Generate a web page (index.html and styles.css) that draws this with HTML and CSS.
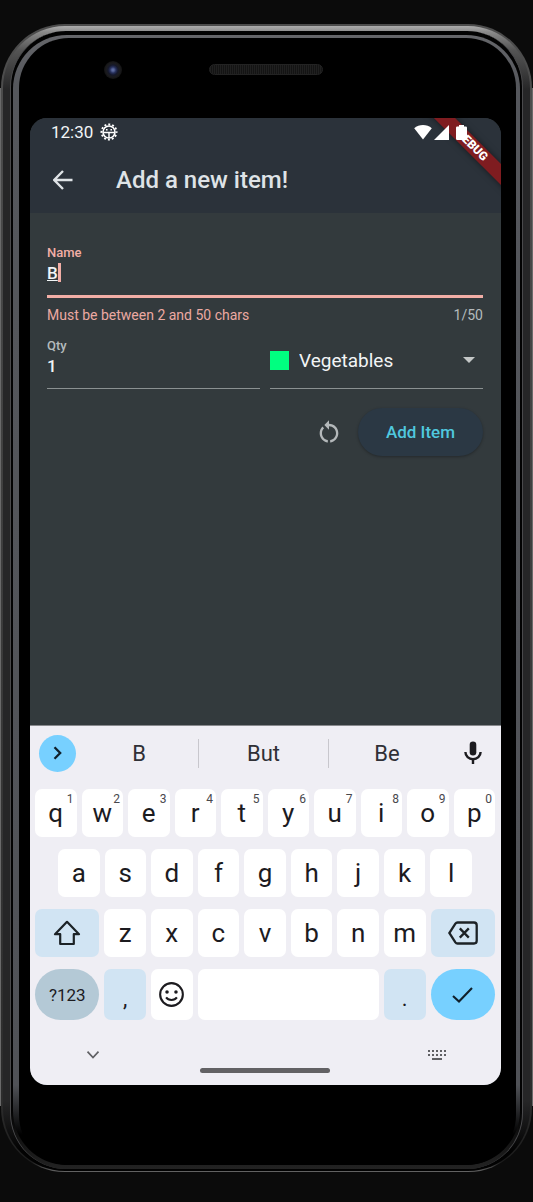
FILE: index.html
```html
<!DOCTYPE html>
<html lang="en">
<head>
<meta charset="utf-8">
<meta name="viewport" content="width=device-width, initial-scale=1">
<title>Add a new item!</title>
<link rel="stylesheet" href="styles.css">
</head>
<body>
<div class="phone">
<div class="rim">
<div class="groove">
<div class="bevel">
<div class="glass">
  <div class="earpiece-row"><span class="camera"></span><span class="earpiece"></span></div>
  <div class="screen">
    <header class="top">
      <div class="status">
        <span>12:30</span>
        <svg class="bug" viewBox="0 0 18 18" aria-hidden="true"><circle cx="9" cy="9" r="7.6" fill="none" stroke="#fff" stroke-width="1.8" stroke-dasharray="2 1.98" stroke-dashoffset="1"/><circle cx="9" cy="9" r="6" fill="none" stroke="#fff" stroke-width="1.6"/><path d="M3.500 9.600h11M9 9.600V15" stroke="#fff" stroke-width="1.500"/><path d="M6 6h1.600v1.400H6zM10.400 6H12v1.400h-1.600z" fill="#fff"/></svg>
        <span class="spacer"></span>
        <svg class="wifi" viewBox="0 0 18 16" aria-hidden="true"><path d="M9 15.500L.2 4.200C5 -.2 13 -.2 17.800 4.200z" fill="#fff"/></svg>
        <svg class="signal" viewBox="0 0 15 15" aria-hidden="true"><path d="M0 15L15 0v15z" fill="#fff"/></svg>
        <svg class="battery" viewBox="0 0 11 15" aria-hidden="true"><path d="M3 0h5v1.500h1.800q1.200 0 1.200 1.200V13.800Q11 15 9.800 15H1.200Q0 15 0 13.800V2.700Q0 1.500 1.200 1.500H3z" fill="#fff"/></svg>
      </div>
      <div class="appbar">
        <button class="icon-btn" aria-label="Back"><svg class="arrow" viewBox="0 0 20 20"><path d="M10 1L1.200 10l8.800 9M1.200 10H19.500" fill="none" stroke="#dfe3e6" stroke-width="2.400"/></svg></button>
        <h1>Add a new item!</h1>
      </div>
    </header>
    <div class="ribbon">DEBUG</div>
    <main>
      <form>
        <div class="field error">
          <label for="name">Name</label>
          <div class="entry"><input id="name" type="text" value="B" maxlength="50" aria-describedby="name-help"><span class="caret"></span></div>
          <div class="help" id="name-help"><span>Must be between 2 and 50 chars</span><span class="count">1/50</span></div>
        </div>
        <div class="pair">
          <div class="field">
            <label for="qty">Qty</label>
            <div class="entry"><input id="qty" type="text" inputmode="numeric" value="1"></div>
          </div>
          <div class="choice">
            <span class="swatch"></span>
            <select aria-label="Category"><option>Vegetables</option></select>
            <svg class="drop" viewBox="0 0 12 6" aria-hidden="true"><path d="M0 0h12L6 6z" fill="#c4c7c7"/></svg>
          </div>
        </div>
        <div class="actions">
          <button class="icon-btn" type="reset" aria-label="Reset"><svg class="reset" viewBox="0 0 24 24"><path fill="#b4b8ba" d="M12 5V2L8 6l4 4V7c3.310 0 6 2.690 6 6 0 2.970-2.170 5.430-5 5.910v2.020c3.950-.490 7-3.850 7-7.930 0-4.420-3.580-8-8-8zm-6 8c0-1.650.67-3.150 1.760-4.240L6.340 7.340C4.900 8.790 4 10.790 4 13c0 4.080 3.050 7.440 7 7.930v-2.020c-2.830-.480-5-2.940-5-5.910z"/></svg></button>
          <button class="add" type="button">Add Item</button>
        </div>
      </form>
    </main>
    <section class="keyboard" aria-label="Keyboard">
      <div class="suggest">
        <button class="more" aria-label="More"><svg class="chev" viewBox="0 0 9 14"><path d="M1.500 1.200L7.200 7l-5.700 5.800" fill="none" stroke="#10202b" stroke-width="2.300"/></svg></button>
        <button class="word">B</button><button class="word mid">But</button><button class="word">Be</button>
        <button class="icon-btn" aria-label="Voice input"><svg class="mic" viewBox="0 0 18 24"><rect x="5.700" y="0.500" width="6.600" height="14" rx="3.300" fill="#1c1b1f"/><path d="M1.400 11a7.600 7.200 0 0 0 15.200 0M9 18v5" fill="none" stroke="#1c1b1f" stroke-width="2.400"/></svg></button>
      </div>
      <div class="keys">
        <div class="row ten"><button>q<sup>1</sup></button><button>w<sup>2</sup></button><button>e<sup>3</sup></button><button>r<sup>4</sup></button><button>t<sup>5</sup></button><button>y<sup>6</sup></button><button>u<sup>7</sup></button><button>i<sup>8</sup></button><button>o<sup>9</sup></button><button>p<sup>0</sup></button></div>
        <div class="row nine"><button>a</button><button>s</button><button>d</button><button>f</button><button>g</button><button>h</button><button>j</button><button>k</button><button>l</button></div>
        <div class="row shift-row">
          <button class="tint" aria-label="Shift"><svg class="shift" viewBox="0 0 28 26"><path d="M14 1.800L2 14.200h5.200V24h13.600v-9.800H26z" fill="none" stroke="#1c2226" stroke-width="2.200" stroke-linejoin="round"/></svg></button>
          <button>z</button><button>x</button><button>c</button><button>v</button><button>b</button><button>n</button><button>m</button>
          <button class="tint" aria-label="Delete"><svg class="del" viewBox="0 0 30 24"><path d="M9.500 1.500H26Q28.700 1.500 28.700 4.200V19.800Q28.700 22.500 26 22.500H9.500Q8.200 22.500 7.400 21.400L1.300 12 7.400 2.600Q8.200 1.500 9.500 1.500zM11.800 7.400l9 9.200M20.800 7.400l-9 9.200" fill="none" stroke="#1c2226" stroke-width="2.300"/></svg></button>
        </div>
        <div class="row space-row">
          <button class="numbers">?123</button>
          <button class="tint punct">,</button>
          <button aria-label="Emoji"><svg class="smile" viewBox="0 0 24 24"><circle cx="12" cy="12" r="10.900" fill="none" stroke="#1c1b1f" stroke-width="2"/><circle cx="7.700" cy="9.600" r="1.700" fill="#1c1b1f"/><circle cx="16.300" cy="9.600" r="1.700" fill="#1c1b1f"/><path d="M6.800 14.800c2.200 3.300 8.200 3.300 10.400 0" fill="none" stroke="#1c1b1f" stroke-width="1.900"/></svg></button>
          <button aria-label="Space"></button>
          <button class="tint punct">.</button>
          <button class="done" aria-label="Done"><svg class="check" viewBox="0 0 21 16"><path d="M1 9l6 5.500L20 1" fill="none" stroke="#10202b" stroke-width="2.100"/></svg></button>
        </div>
      </div>
      <div class="nav">
        <button class="icon-btn" aria-label="Hide keyboard"><svg class="down" viewBox="0 0 18 12"><path d="M3.500 2.700L9 8.500l5.500-5.800" fill="none" stroke="#606064" stroke-width="1.700"/></svg></button>
        <span class="home"></span>
        <button class="icon-btn" aria-label="Switch keyboard"><svg class="kb" viewBox="0 0 18 12"><path d="M0 2h18M0 6h18" stroke="#606064" stroke-width="2" stroke-dasharray="2 2"/><path d="M4 10h10" stroke="#606064" stroke-width="2"/></svg></button>
      </div>
    </section>
  </div>
</div>
</div>
</div>
</div>
</div>
</body>
</html>
```
FILE: styles.css
```css
* { box-sizing: border-box; }

body {
  margin: 0;
  min-height: 100vh;
  padding: 24px 1px 30px;
  display: flex;
  font-family: Roboto, "Liberation Sans", sans-serif;
  background:
    linear-gradient(#6a6a6a, #6a6a6a) left 88px / 1px calc(100% - 184px) no-repeat,
    linear-gradient(#6a6a6a, #6a6a6a) right 88px / 1px calc(100% - 184px) no-repeat,
    #0b0b0b;
}

button, input, select { font: inherit; color: inherit; border: 0; margin: 0; padding: 0; background: none; }
button { cursor: pointer; }
svg { display: block; }

.phone, .rim, .groove, .bevel, .glass { flex: 1; min-width: 0; display: flex; }
.phone {
  border-radius: 64px;
  padding: 2px 2px 1px;
  background: linear-gradient(#4c4c4c, #4c4c4c 80px, #2c2c2c calc(100% - 70px), #1c1c1c calc(100% - 10px), #666);
}
.rim {
  border-radius: 62px;
  padding: 5px 7px 2px;
  background: linear-gradient(#adadad, #8a8a8a 6px, #555 24px, #262627 64px, #262627 calc(100% - 70px), #020202 calc(100% - 20px));
}
.groove {
  border-radius: 56px;
  padding: 4px 2px;
  border: 1px solid #4a4a4c;
  border-width: 0 1px;
  background: linear-gradient(#020202, #020202 calc(100% - 60px), #232323);
}
.bevel {
  border-radius: 54px;
  padding: 3px 4px 0 6px;
  background: linear-gradient(#65666a, #55575c 50px, #505257 calc(100% - 80px), #000 calc(100% - 30px));
}
.glass {
  border-radius: 50px;
  padding: 0 15px 80px 11px;
  flex-direction: column;
  background: #000;
}

.earpiece-row { height: 80px; padding-top: 23px; display: grid; grid-template-columns: 1fr 114px 1fr; }
.camera { width: 18px; height: 18px; margin-left: 74px; border-radius: 50%; background: radial-gradient(#5c6ba0 0 1px, #27305c 3px, #15182a 5px, #1b1b1d 7px, #121213 9px); }
.earpiece { height: 11px; margin-top: 3px; border-radius: 6px; border: 1px solid #232323; background: repeating-linear-gradient(90deg, #202020 0 1px, #141414 1px 2px); }

.screen {
  flex: 1;
  position: relative;
  display: flex;
  flex-direction: column;
  overflow: hidden;
  border-radius: 17px;
  background: #333a3d;
  color: #f2f5f6;
}
.top { background: #2b323a; }
.status { position: relative; z-index: 2; height: 28px; padding: 0 34px 0 21px; display: flex; align-items: center; font-size: 17px; }
.bug { width: 18px; height: 18px; margin-left: 7px; }
.spacer { flex: 1; }
.wifi { width: 18px; height: 16px; }
.signal { width: 15px; height: 15px; margin-left: 2px; }
.battery { width: 11px; height: 15px; margin-left: 7px; }
.appbar { height: 67px; padding-left: 23px; display: flex; align-items: center; gap: 43px; color: #dfe3e6; }
.appbar h1 { margin: 0; font-size: 24px; line-height: 28px; font-weight: 500; }
.arrow { width: 20px; height: 20px; }
.icon-btn { display: flex; align-items: center; justify-content: center; }

.ribbon {
  position: absolute;
  z-index: 1;
  top: 20px;
  right: -31px;
  width: 120px;
  height: 15px;
  transform: rotate(45deg);
  background: #7f1c20;
  box-shadow: 0 0 6px rgba(0, 0, 0, .5);
  color: #fff;
  font-size: 12px;
  line-height: 15px;
  font-weight: 900;
  text-align: center;
}

main { flex: 1; padding: 32px 18px 0 17px; }
.field label { display: block; font-size: 13px; line-height: 16px; color: #b4babc; font-weight: 500; }
.entry { position: relative; border-bottom: 1px solid #8b9192; padding-bottom: 10px; }
.entry input { display: block; width: 100%; height: 24px; font-size: 17px; font-weight: 500; outline: 0; }
.error label { color: #f2aea6; }
.error .entry { border-bottom: 3px solid #f2aea6; }
.error input { text-decoration: underline; }
.caret { position: absolute; left: 11px; top: 2px; width: 3px; height: 19px; background: #f2aea6; }
.help { display: flex; justify-content: space-between; margin-top: 7px; font-size: 14px; line-height: 20px; color: #eca9a2; }
.count { color: #b4babc; }
.pair { display: grid; grid-template-columns: 1fr 1fr; gap: 10px; margin-top: 13px; }
.choice { display: flex; align-items: center; padding: 0 8px 6px 0; border-bottom: 1px solid #8b9192; }
.swatch { width: 19px; height: 19px; background: #00ff80; }
.choice select { flex: 1; min-width: 0; margin-left: 10px; font-size: 19px; appearance: none; outline: 0; }
.drop { width: 12px; height: 6px; }
.actions { display: flex; justify-content: flex-end; align-items: center; gap: 15px; margin-top: 19px; }
.reset { width: 28px; height: 28px; }
.add { height: 48px; padding: 0 28px; border-radius: 24px; background: #2b3844; color: #50c8df; font-size: 17px; font-weight: 500; box-shadow: 0 1px 3px rgba(0, 0, 0, .3); }

.keyboard { background: #efeef4; color: #1c1b1f; border-top: 1px solid #88898d; }
.suggest { height: 54px; display: grid; grid-template-columns: 50px 118fr 131fr 116fr 56px; align-items: center; }
.more { width: 37px; height: 37px; margin-left: 9px; border-radius: 50%; background: #77d0ff; display: flex; align-items: center; justify-content: center; }
.chev { width: 9px; height: 14px; }
.word { height: 29px; font-size: 22px; line-height: 29px; color: #303036; }
.mid { border: 1px solid #c8c7cd; border-width: 0 1px; }
.mic { width: 18px; height: 24px; }

.keys { display: grid; gap: 12px; padding: 9px 6px 0 5px; }
.row { display: grid; gap: 5px; }
.ten { grid-template-columns: repeat(10, 1fr); }
.nine { grid-template-columns: repeat(9, 1fr); padding: 0 23px; }
.shift-row { grid-template-columns: 155fr repeat(7, 100fr) 155fr; }
.space-row { grid-template-columns: 155fr 100fr 100fr 436fr 100fr 155fr; }
.row button { position: relative; min-width: 0; height: 48px; border-radius: 7px; background: #fff; font-size: 26px; line-height: 44px; display: flex; justify-content: center; align-items: center; }
.space-row button { height: 51px; }
.row sup { position: absolute; top: 3px; right: 3px; font-size: 12px; line-height: 14px; color: #48474c; }
.row .tint { background: #d1e4f3; }
.row .punct { padding-top: 8px; font-size: 22px; }
.row .numbers { border-radius: 26px; background: #b4c9d6; font-size: 17px; }
.row .done { border-radius: 26px; background: #77d0ff; }
.shift { width: 28px; height: 26px; }
.del { width: 30px; height: 24px; }
.smile { width: 25px; height: 25px; }
.check { width: 21px; height: 16px; }

.nav { height: 65px; padding: 0 55px 12px 54px; display: flex; justify-content: space-between; align-items: flex-end; }
.nav .icon-btn { padding-bottom: 12px; }
.down, .kb { width: 18px; height: 12px; }
.home { width: 130px; height: 5px; border-radius: 3px; background: #626164; }
```
